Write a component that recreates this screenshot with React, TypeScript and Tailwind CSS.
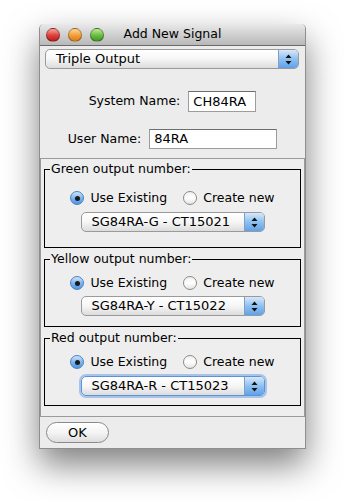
import { useState } from 'react';

type Output = {
  label: string;
  value: string;
  legendClass: string;
  radioClass: string;
  comboClass: string;
  focused?: boolean;
};

const outputs: Output[] = [
  { label: 'Green output number:', value: 'SG84RA-G - CT15021', legendClass: 'pb-[15px]', radioClass: 'mt-[13px]', comboClass: 'mt-[6px]' },
  { label: 'Yellow output number:', value: 'SG84RA-Y - CT15022', legendClass: 'pb-[10px]', radioClass: 'mt-[8px]', comboClass: 'mt-[5px]' },
  { label: 'Red output number:', value: 'SG84RA-R - CT15023', legendClass: 'pb-[9px]', radioClass: 'mt-[8px]', comboClass: 'mt-[6px]', focused: true },
];

function Arrows() {
  return (
    <svg width="7" height="11" viewBox="0 0 7 11">
      <path d="M3.5 0.5 L6.5 4 L0.5 4 Z" fill="#111" />
      <path d="M3.5 10.5 L6.5 7 L0.5 7 Z" fill="#111" />
    </svg>
  );
}

function Combo({ value, className, focused }: { value: string; className?: string; focused?: boolean }) {
  return (
    <div
      className={`flex h-[20px] items-stretch overflow-hidden rounded-[5px] border ${
        focused ? 'border-[#5f92d2] shadow-[0_0_0_2px_rgba(110,160,230,0.55)]' : 'border-[#9a9a9a]'
      } bg-gradient-to-b from-white via-[#f6f6f6] to-[#dcdcdc] ${className ?? ''}`}
    >
      <div className="flex-1 truncate pl-[10px] text-[13px] leading-[18px] text-black">{value}</div>
      <div className="flex w-[20px] items-center justify-center border-l border-[#7f9fc8] bg-gradient-to-b from-[#d6e8fa] via-[#8ec0f0] to-[#5fa2e8]">
        <Arrows />
      </div>
    </div>
  );
}

function Radio({ checked }: { checked: boolean }) {
  return checked ? (
    <span className="flex h-[14px] w-[14px] items-center justify-center rounded-full border border-[#4d7fbf] bg-gradient-to-b from-[#cfe4fb] via-[#7fb6ee] to-[#4e97e4]">
      <span className="h-[5px] w-[5px] rounded-full bg-[#1a1a1a]" />
    </span>
  ) : (
    <span className="h-[14px] w-[14px] rounded-full border border-[#8a8a8a] bg-gradient-to-b from-[#f0f0f0] via-white to-[#e4e4e4]" />
  );
}

function Light({ color }: { color: string }) {
  return <span className={`h-[14px] w-[14px] rounded-full border border-black/30 ${color}`} />;
}

export default function App() {
  const [choice, setChoice] = useState<boolean[]>([true, true, true]);

  return (
    <div
      className="h-[501px] w-[345px] bg-white pl-[39px] pt-[24px]"
      style={{ fontFamily: '"DejaVu Sans", "Lucida Grande", sans-serif' }}
    >
      <div className="w-[267px] overflow-hidden rounded-t-[5px] border-x border-b border-[#8e8e8e] bg-[#ececec] shadow-[0_16px_34px_rgba(0,0,0,0.5)]">
        {/* Title bar */}
        <div className="grid h-[22px] grid-cols-[1fr_auto_1fr] items-center border-b border-[#6a6a6a] bg-gradient-to-b from-[#e9e9e9] to-[#b8b8b8]">
          <div className="flex gap-[8px] pl-[6px]">
            <Light color="bg-gradient-to-b from-[#f4a19b] via-[#e0443e] to-[#b71c18]" />
            <Light color="bg-gradient-to-b from-[#fbd89b] via-[#f2a33a] to-[#d9791a]" />
            <Light color="bg-gradient-to-b from-[#c3ea9c] via-[#6cbf45] to-[#3f9424]" />
          </div>
          <div className="text-[12.5px] text-black">Add New Signal</div>
          <div />
        </div>

        {/* Type selector */}
        <Combo value="Triple Output" className="mx-[5px] mt-[3px] w-[254px]" />

        {/* Names */}
        <div className="mt-[22px] flex items-center justify-center gap-[8px] text-[12.5px] text-black">
          <span>System Name:</span>
          <div className="h-[21px] w-[68px] border border-[#9c9c9c] border-t-[#6e6e6e] bg-white pl-[4px] text-[13px] leading-[19px]">CH84RA</div>
        </div>
        <div className="mt-[17px] flex items-center justify-center gap-[8px] text-[12.5px] text-black">
          <span>User Name:</span>
          <div className="h-[20px] w-[128px] border border-[#9c9c9c] border-t-[#6e6e6e] bg-white pl-[4px] text-[13px] leading-[18px]">84RA</div>
        </div>

        {/* Output panels */}
        <div className="mt-[9px] flex flex-col gap-[3px] border border-[#9a9a9a] bg-[#eeeeee] px-[3px] pb-[10px] pt-[2px]">
          {outputs.map((o, i) => (
            <fieldset key={o.label} className={`border border-black px-0 ${o.legendClass}`}>
              <legend className="ml-[5px] px-[1px] text-[12.5px] leading-[16px] text-black">{o.label}</legend>
              <div className={`flex h-[16px] items-center justify-center text-[12.5px] text-black ${o.radioClass}`}>
                <button className="flex items-center gap-[6px]" onClick={() => setChoice(choice.map((c, j) => (j === i ? true : c)))}>
                  <Radio checked={choice[i]} />
                  <span>Use Existing</span>
                </button>
                <button className="ml-[16px] flex items-center gap-[6px]" onClick={() => setChoice(choice.map((c, j) => (j === i ? false : c)))}>
                  <Radio checked={!choice[i]} />
                  <span>Create new</span>
                </button>
              </div>
              <div className="flex justify-center">
                <Combo value={o.value} focused={o.focused} className={`w-[184px] ${o.comboClass}`} />
              </div>
            </fieldset>
          ))}
        </div>

        {/* Footer */}
        <div className="px-[6px] pb-[4px] pt-[3px]">
          <button className="h-[21px] w-[63px] rounded-full border border-[#8a8a8a] bg-gradient-to-b from-white via-[#f4f4f4] to-[#dedede] text-[13px] leading-[19px] text-black">
            OK
          </button>
        </div>
      </div>
    </div>
  );
}
